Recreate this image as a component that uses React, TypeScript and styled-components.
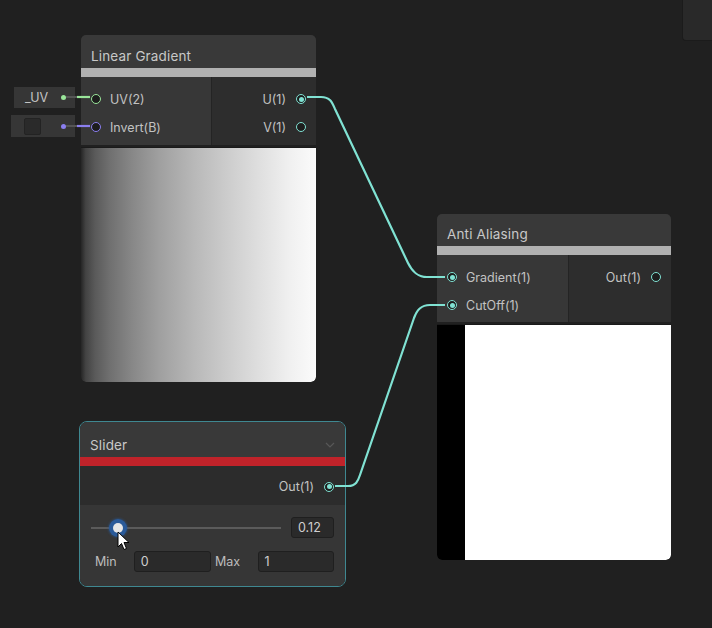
import styled, { createGlobalStyle } from 'styled-components';

const GlobalStyle = createGlobalStyle`
  body {
    margin: 0;
    background: #202020;
  }
`;

const Canvas = styled.div`
  position: relative;
  width: 712px;
  height: 628px;
  background: #202020;
  overflow: hidden;
  font-family: Inter, 'Liberation Sans', sans-serif;
  color: #c4c4c4;
`;

const DockPanel = styled.div`
  position: absolute;
  top: 0;
  right: 0;
  width: 29px;
  height: 40px;
  background: #292929;
  border-left: 1px solid #1b1b1b;
  border-bottom: 1px solid #1b1b1b;
  border-bottom-left-radius: 4px;
`;

const NodeFrame = styled.div<{ $x: number; $y: number; $w: number; $selected?: boolean }>`
  position: absolute;
  left: ${(p) => p.$x}px;
  top: ${(p) => p.$y}px;
  width: ${(p) => p.$w}px;
  box-sizing: border-box;
  display: flex;
  flex-direction: column;
  border-radius: ${(p) => (p.$selected ? 8 : 5)}px;
  border: ${(p) => (p.$selected ? '1px solid #3f8891' : 'none')};
  overflow: hidden;
  background: #202020;
`;

const Header = styled.div<{ $h: number }>`
  height: ${(p) => p.$h}px;
  background: #393939;
  display: flex;
  align-items: flex-end;
  justify-content: space-between;
  padding: 0 10px 4px 10px;
  box-sizing: border-box;
`;

const Title = styled.span`
  font-size: 13.5px;
  color: #c8c8c8;
  letter-spacing: 0.15px;
`;

const Chevron = styled.svg`
  width: 10px;
  height: 6px;
  margin-bottom: 5px;
`;

const Bar = styled.div<{ $color: string }>`
  height: 9px;
  background: ${(p) => p.$color};
`;

const PortGrid = styled.div<{ $left: number; $h: number }>`
  display: grid;
  grid-template-columns: ${(p) => p.$left}px 1fr;
  height: ${(p) => p.$h}px;
  gap: 1px;
  background: #242424;
`;

const PortCol = styled.div<{ $side: 'in' | 'out' }>`
  display: flex;
  flex-direction: column;
  padding-top: 8px;
  background: ${(p) => (p.$side === 'in' ? '#373737' : '#2d2d2d')};
`;

const PortRow = styled.div<{ $side: 'in' | 'out' }>`
  height: 28px;
  display: flex;
  align-items: center;
  gap: ${(p) => (p.$side === 'in' ? 9 : 10)}px;
  justify-content: ${(p) => (p.$side === 'in' ? 'flex-start' : 'flex-end')};
  padding: 0 10px;
`;

const Port = styled.span<{ $color: string; $connected?: boolean }>`
  position: relative;
  flex: none;
  width: 10px;
  height: 10px;
  box-sizing: border-box;
  border-radius: 50%;
  border: 1.5px solid ${(p) => p.$color};
  background: #1d1d1d;

  &::after {
    content: '';
    position: absolute;
    inset: 1.5px;
    border-radius: 50%;
    background: ${(p) => (p.$connected ? p.$color : 'transparent')};
  }
`;

const Label = styled.span`
  font-size: 12.5px;
  color: #c2c2c2;
  white-space: nowrap;
`;

const Preview = styled.div<{ $h: number; $fill: string }>`
  height: ${(p) => p.$h}px;
  margin-top: 2px;
  border-top: 1px solid #1a1a1a;
  background: ${(p) => p.$fill};
  border-bottom-left-radius: 5px;
  border-bottom-right-radius: 5px;
`;

const PropertyChip = styled.div<{ $x: number; $y: number; $w: number; $h: number }>`
  position: absolute;
  left: ${(p) => p.$x}px;
  top: ${(p) => p.$y}px;
  width: ${(p) => p.$w}px;
  height: ${(p) => p.$h}px;
  box-sizing: border-box;
  background: #363636;
  display: flex;
  align-items: center;
  justify-content: space-between;
  padding: 0 9px 0 11px;
  font-size: 12.5px;
  color: #c4c4c4;
`;

const ChipDot = styled.span<{ $color: string }>`
  width: 5px;
  height: 5px;
  border-radius: 50%;
  background: ${(p) => p.$color};
`;

const Checkbox = styled.span`
  width: 17px;
  height: 17px;
  margin-left: 2px;
  box-sizing: border-box;
  border-radius: 2px;
  background: #2a2a2a;
  border: 1px solid #232323;
`;

const OutRow = styled.div`
  height: 39px;
  background: #2c2c2c;
  display: flex;
  align-items: center;
  justify-content: flex-end;
  gap: 10px;
  padding: 2px 11px 0 0;
  box-sizing: border-box;
`;

const Controls = styled.div`
  background: #363636;
  padding: 12px 11px 14px 11px;
  display: flex;
  flex-direction: column;
  gap: 13px;
`;

const SliderLine = styled.div`
  display: flex;
  align-items: center;
  gap: 10px;
`;

const Track = styled.div`
  position: relative;
  flex: 1;
  height: 2px;
  background: #5b5b5b;
`;

const Knob = styled.span`
  position: absolute;
  top: 50%;
  width: 10px;
  height: 10px;
  border-radius: 50%;
  background: #e6e6e6;
  transform: translate(-50%, -50%);
  box-shadow: 0 0 0 4px #2a5a99, 0 0 2px 5px rgba(42, 90, 153, 0.45);
`;

const Field = styled.div<{ $w: number }>`
  width: ${(p) => p.$w}px;
  height: 21px;
  box-sizing: border-box;
  background: #2a2a2a;
  border: 1px solid #1f1f1f;
  border-radius: 3px;
  display: flex;
  align-items: center;
  padding-left: 6px;
  font-size: 12.5px;
  color: #cfcfcf;
`;

const RangeLine = styled.div`
  display: flex;
  align-items: center;
`;

const RangeLabel = styled.span<{ $w: number }>`
  width: ${(p) => p.$w}px;
  padding-left: 4px;
  box-sizing: border-box;
  font-size: 12.5px;
  color: #bdbdbd;
`;

const Wires = styled.svg`
  position: absolute;
  left: 0;
  top: 0;
  width: 712px;
  height: 628px;
  pointer-events: none;
`;

const Cursor = styled.svg`
  position: absolute;
  left: 117px;
  top: 531px;
  width: 14px;
  height: 20px;
`;

const TEAL = '#80e2d3';
const GREEN = '#9ae69a';
const PURPLE = '#8b7ff0';

const gammaRamp =
  'linear-gradient(to right, #262626 0%, #434343 2%, #5a5a5a 6%, #6f6f6f 12%, #888 22%, #9f9f9f 33%, #b8b8b8 48%, #cccccc 62%, #dfdfdf 76%, #efefef 88%, #fbfbfb 100%)';

export default function App() {
  const sliderValue = 0.12;
  const cut = Math.round(sliderValue * 234);

  return (
    <Canvas>
      <GlobalStyle />
      <DockPanel />

      <PropertyChip $x={14} $y={87} $w={61} $h={21}>
        <span>_UV</span>
        <ChipDot $color={GREEN} />
      </PropertyChip>
      <PropertyChip $x={11} $y={115} $w={64} $h={22}>
        <Checkbox />
        <ChipDot $color={PURPLE} />
      </PropertyChip>

      <NodeFrame $x={81} $y={35} $w={235}>
        <Header $h={33}>
          <Title>Linear Gradient</Title>
        </Header>
        <Bar $color="#b1b1b1" />
        <PortGrid $left={130} $h={68}>
          <PortCol $side="in">
            <PortRow $side="in">
              <Port $color={GREEN} />
              <Label>UV(2)</Label>
            </PortRow>
            <PortRow $side="in">
              <Port $color={PURPLE} />
              <Label>Invert(B)</Label>
            </PortRow>
          </PortCol>
          <PortCol $side="out">
            <PortRow $side="out">
              <Label>U(1)</Label>
              <Port $color={TEAL} $connected />
            </PortRow>
            <PortRow $side="out">
              <Label>V(1)</Label>
              <Port $color={TEAL} />
            </PortRow>
          </PortCol>
        </PortGrid>
        <Preview $h={234} $fill={gammaRamp} />
      </NodeFrame>

      <NodeFrame $x={437} $y={214} $w={234}>
        <Header $h={32}>
          <Title>Anti Aliasing</Title>
        </Header>
        <Bar $color="#b1b1b1" />
        <PortGrid $left={131} $h={67}>
          <PortCol $side="in">
            <PortRow $side="in">
              <Port $color={TEAL} $connected />
              <Label>Gradient(1)</Label>
            </PortRow>
            <PortRow $side="in">
              <Port $color={TEAL} $connected />
              <Label>CutOff(1)</Label>
            </PortRow>
          </PortCol>
          <PortCol $side="out">
            <PortRow $side="out">
              <Label>Out(1)</Label>
              <Port $color={TEAL} />
            </PortRow>
          </PortCol>
        </PortGrid>
        <Preview $h={235} $fill={`linear-gradient(to right, #000 0, #000 ${cut}px, #fff ${cut}px)`} />
      </NodeFrame>

      <NodeFrame $x={79} $y={421} $w={267} $selected>
        <Header $h={35}>
          <Title>Slider</Title>
          <Chevron viewBox="0 0 10 6">
            <path d="M1 1 L5 5 L9 1" fill="none" stroke="#575757" strokeWidth="1.2" />
          </Chevron>
        </Header>
        <Bar $color="#c0232a" />
        <OutRow>
          <Label>Out(1)</Label>
          <Port $color={TEAL} $connected />
        </OutRow>
        <Controls>
          <SliderLine>
            <Track>
              <Knob style={{ left: `${sliderValue * 100 + 2}%` }} />
            </Track>
            <Field $w={43}>{sliderValue}</Field>
          </SliderLine>
          <RangeLine>
            <RangeLabel $w={43}>Min</RangeLabel>
            <Field $w={78}>0</Field>
            <RangeLabel $w={47}>Max</RangeLabel>
            <Field $w={77}>1</Field>
          </RangeLine>
        </Controls>
      </NodeFrame>

      <Wires viewBox="0 0 712 628">
        <line x1="66" y1="97" x2="77" y2="97" stroke="#555" strokeWidth="2" />
        <line x1="77" y1="97" x2="90" y2="97" stroke={GREEN} strokeWidth="2.2" />
        <line x1="66" y1="126" x2="77" y2="126" stroke="#555" strokeWidth="2" />
        <line x1="77" y1="126" x2="90" y2="126" stroke={PURPLE} strokeWidth="2.2" />
        <path
          d="M307 97 L321 97 C330 97 332 102 335 109 L408 263 C412 271 417 277 427 277 L445 277"
          fill="none"
          stroke={TEAL}
          strokeWidth="2.2"
        />
        <path
          d="M335 486 L348 486 C356 486 358 481 360 475 L414 318 C417 310 421 305 430 305 L445 305"
          fill="none"
          stroke={TEAL}
          strokeWidth="2.2"
        />
      </Wires>

      <Cursor viewBox="0 0 14 20">
        <path
          d="M1 1 L1 16 L4.5 12.5 L7 18.5 L9.5 17.5 L7 11.5 L12 11.5 Z"
          fill="#fff"
          stroke="#000"
          strokeWidth="1"
          strokeLinejoin="round"
        />
      </Cursor>
    </Canvas>
  );
}
